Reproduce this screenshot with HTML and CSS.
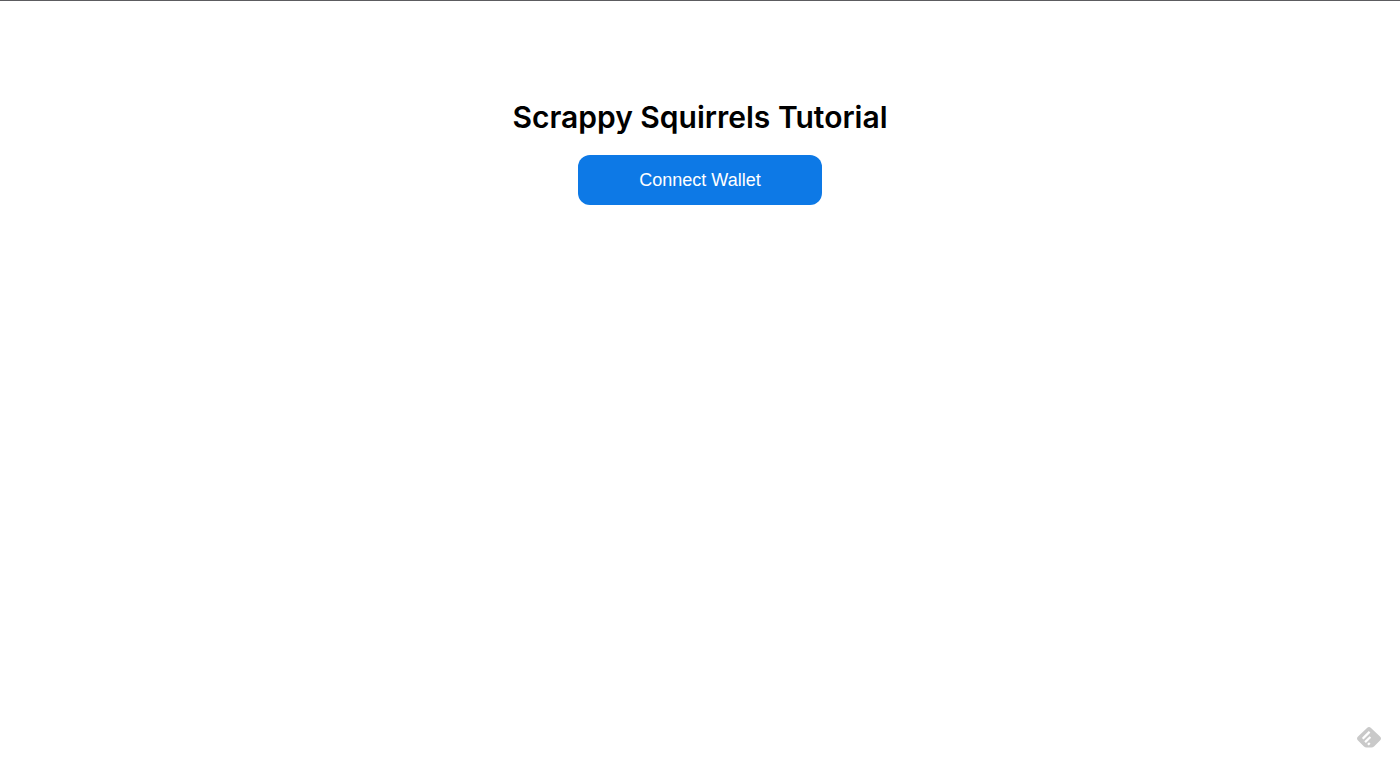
FILE: index.html
```
<!DOCTYPE html>
<html lang="en">
<head>
<meta charset="utf-8">
<title>Scrappy Squirrels Tutorial</title>
<link rel="stylesheet" href="styles.css">
</head>
<body>
<main class="main-app">
<h1 class="title">Scrappy Squirrels Tutorial</h1>
<button class="cta-button" type="button">Connect Wallet</button>
</main>
<button class="feedly-mini" type="button" aria-label="Follow in Feedly">
<svg class="feedly-icon" viewBox="0 0 24 21" aria-hidden="true">
<path fill="#c9c9c9" d="M10 1Q12 -1 14 1L23 9.500Q25 11.500 23 13.500L17 19.500Q16 20.500 14.500 20.500H9.500Q8 20.500 7 19.500L1 13.500Q-1 11.500 1 9.500Z"/>
<g stroke="#fff" stroke-width="2.200" stroke-linecap="square" fill="none"><path d="M6.500 10.900L11.800 5.600M8.900 14.400L12.600 10.700M11.700 17L12 16.700"/></g>
</svg>
</button>
</body>
</html>
```
FILE: styles.css
```
body {
  margin: 0;
  border-top: 1px solid #5c5c60;
  background: #fff;
  color: #000;
  font-family: Inter, "Liberation Sans", sans-serif;
}
.main-app {
  padding-top: 96px;
  text-align: center;
}
.title {
  margin: 0 0 18px;
  font-size: 30px;
  line-height: 40px;
  font-weight: 600;
}
.cta-button {
  width: 244px;
  height: 50px;
  padding: 0;
  border: 0;
  border-radius: 12px;
  background: #0d79e6;
  color: #fff;
  font: 18px "Liberation Sans", Arial, sans-serif;
  cursor: pointer;
}
.feedly-mini {
  position: fixed;
  right: 19px;
  bottom: 20px;
  padding: 0;
  border: 0;
  background: none;
}
.feedly-icon {
  display: block;
  width: 24px;
  height: 21px;
}
```
